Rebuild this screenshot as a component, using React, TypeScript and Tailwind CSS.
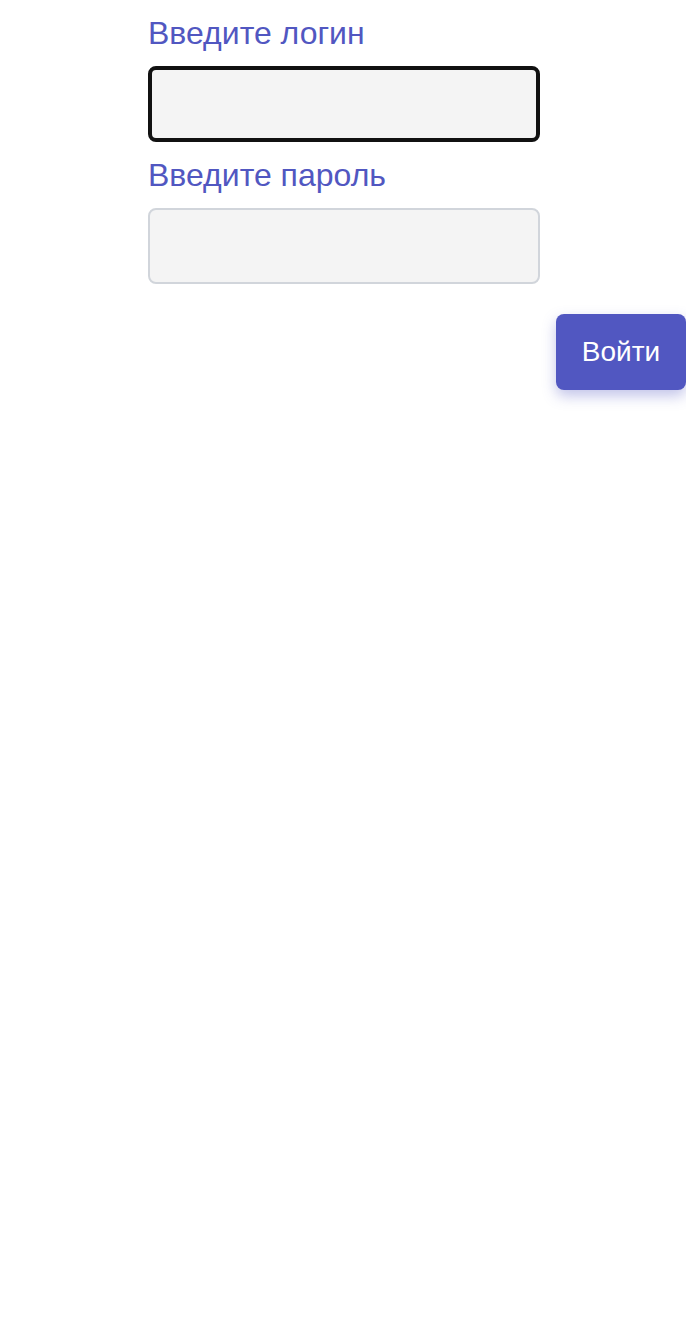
export default function App() {
  return (
    <div className="min-h-[1334px] w-[686px] bg-white" style={{ fontFamily: "'Liberation Sans', Arial, sans-serif" }}>
      <div className="flex flex-col pt-[15px]">
        <div className="ml-[148px] flex w-[392px] flex-col">
          <label className="text-[32px] leading-[36px] text-[#5157c1]">Введите логин</label>
          <input
            type="text"
            className="mt-[15px] h-[76px] w-full rounded-[8px] border-4 border-[#111111] bg-[#f4f4f4] outline-none"
          />
          <label className="mt-[15px] text-[32px] leading-[36px] text-[#5157c1]">Введите пароль</label>
          <input
            type="password"
            className="mt-[15px] h-[76px] w-full rounded-[8px] border-2 border-[#d1d5db] bg-[#f4f4f4] outline-none"
          />
        </div>
        <div className="mt-[30px] flex justify-end">
          <button className="h-[76px] w-[130px] rounded-[8px] bg-[#5157c1] text-[28px] text-white shadow-[0_6px_14px_rgba(81,87,193,0.35)]">
            Войти
          </button>
        </div>
      </div>
    </div>
  );
}
